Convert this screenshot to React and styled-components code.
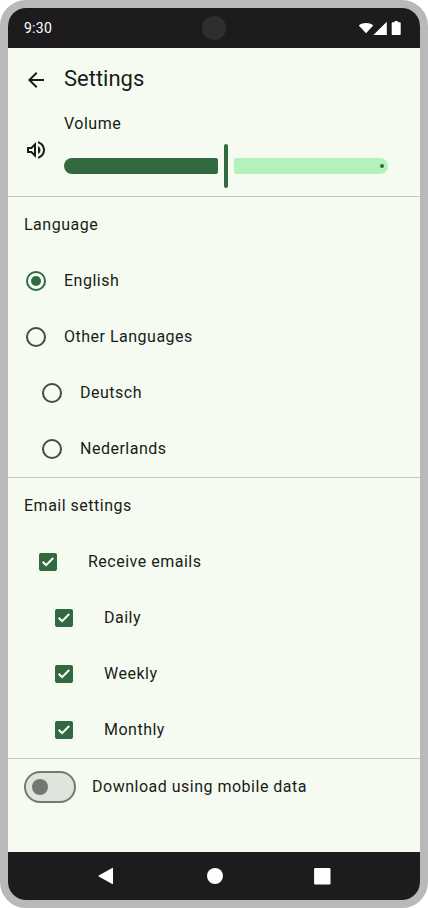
import React, { useState } from "react";
import styled, { createGlobalStyle } from "styled-components";

const GlobalStyle = createGlobalStyle`
  *, *::before, *::after { box-sizing: border-box; }
  body { margin: 0; background: #ffffff; font-family: Roboto, sans-serif; color: #181d18; }
  svg { display: block; }
`;

const Device = styled.div`
  display: flex;
  flex-direction: column;
  width: 428px;
  height: 908px;
  border: 8px solid #b9b9b9;
  border-radius: 26px;
  background: #f5fbf1;
  overflow: hidden;
`;

const StatusBar = styled.header`
  display: grid;
  grid-template-columns: 1fr 24px 1fr;
  align-items: center;
  flex: none;
  height: 40px;
  padding: 0 16px;
  background: #1d1b1e;
  color: #ffffff;
`;

const Clock = styled.time`
  font-size: 14px;
  line-height: 20px;
  letter-spacing: 0.25px;
`;

const Camera = styled.span`
  width: 24px;
  height: 24px;
  border-radius: 50%;
  background: #2e2e2e;
`;

const StatusIcons = styled.svg`
  justify-self: end;
  width: 46px;
  height: 16px;
`;

const AppBar = styled.div`
  display: flex;
  align-items: center;
  flex: none;
  gap: 16px;
  height: 64px;
  padding: 0 16px;
`;

const Title = styled.h1`
  margin: 0;
  font-size: 22px;
  font-weight: 400;
  line-height: 28px;
  padding-bottom: 2px;
`;

const IconButton = styled.button`
  width: 24px;
  height: 24px;
  padding: 0;
  border: 0;
  background: none;
  color: ${(p) => p.$tone || "#181d18"};
`;

const Content = styled.main`
  flex: 1;
`;

const VolumeSection = styled.section`
  display: grid;
  grid-template-columns: 24px 324px;
  column-gap: 16px;
  align-items: center;
  height: 84px;
  padding: 0 16px 8px;
`;

const VolumeControl = styled.div`
  display: flex;
  flex-direction: column;
  gap: 8px;
`;

const Label = styled.span`
  font-size: 16px;
  line-height: 24px;
  letter-spacing: 0.5px;
`;

const Slider = styled.div`
  display: flex;
  align-items: center;
  gap: 6px;
  height: 44px;
`;

const ActiveTrack = styled.div`
  height: 16px;
  border-radius: 8px 2px 2px 8px;
  background: #326941;
`;

const Handle = styled.div`
  flex: none;
  width: 4px;
  height: 44px;
  border-radius: 2px;
  background: #326941;
`;

const InactiveTrack = styled.div`
  display: flex;
  flex: 1;
  align-items: center;
  justify-content: flex-end;
  height: 16px;
  padding-right: 4px;
  border-radius: 2px 8px 8px 2px;
  background: #b4f1bd;
`;

const Stop = styled.span`
  width: 4px;
  height: 4px;
  border-radius: 50%;
  background: #326941;
`;

const Section = styled.section`
  border-top: 1px solid #c1c9bf;
`;

const Row = styled.div`
  display: flex;
  align-items: center;
  gap: ${(p) => p.$gap ?? 16}px;
  height: 56px;
  padding-left: ${(p) => p.$indent ?? 16}px;
`;

const Radio = styled.span`
  display: grid;
  place-items: center;
  width: 20px;
  height: 20px;
  margin: 2px;
  border: 2px solid ${(p) => (p.$checked ? "#326941" : "#414941")};
  border-radius: 50%;

  &::after {
    content: "";
    width: 10px;
    height: 10px;
    border-radius: 50%;
    background: ${(p) => (p.$checked ? "#326941" : "transparent")};
  }
`;

const Checkbox = styled.span`
  width: 18px;
  height: 18px;
  border: 2px solid ${(p) => (p.$checked ? "#326941" : "#414941")};
  border-radius: 2px;
  background: ${(p) => (p.$checked ? "#326941" : "transparent")};
`;

const CheckMark = styled.svg`
  width: 18px;
  height: 18px;
  margin: -2px;
`;

const Switch = styled.span`
  display: flex;
  align-items: center;
  justify-content: ${(p) => (p.$on ? "flex-end" : "flex-start")};
  width: 52px;
  height: 32px;
  padding: 0 6px;
  border: 2px solid #717970;
  border-radius: 16px;
  background: ${(p) => (p.$on ? "#326941" : "#dfe4dc")};
`;

const Thumb = styled.span`
  width: 16px;
  height: 16px;
  border-radius: 50%;
  background: ${(p) => (p.$on ? "#ffffff" : "#717970")};
`;

const NavBar = styled.nav`
  display: flex;
  align-items: center;
  justify-content: center;
  flex: none;
  gap: 84px;
  height: 48px;
  padding-left: 2px;
  background: #1d1b1e;
`;

const languages = [
  { name: "English", indent: 16 },
  { name: "Other Languages", indent: 16 },
  { name: "Deutsch", indent: 32 },
  { name: "Nederlands", indent: 32 },
];

const emails = [
  { name: "Receive emails", indent: 31 },
  { name: "Daily", indent: 47 },
  { name: "Weekly", indent: 47 },
  { name: "Monthly", indent: 47 },
];

export default function App() {
  const [language, setLanguage] = useState("English");
  const [checked, setChecked] = useState(emails.map(() => true));
  const [mobileData, setMobileData] = useState(false);
  const volume = 154;

  return (
    <>
      <GlobalStyle />
      <Device>
        <StatusBar>
          <Clock>9:30</Clock>
          <Camera />
          <StatusIcons viewBox="0 0 46 16" fill="#fff">
            <path d="M8 13.2.8 5.4C2.8 3.8 5.3 3 8 3s5.2.8 7.2 2.4z" />
            <path d="M28.8 1.7V15H15.4z" />
            <path d="M34.7 2.3h1.9V1h3.2v1.3h1.9c.6 0 1 .4 1 1V14c0 .6-.4 1-1 1h-7c-.6 0-1-.4-1-1V3.3c0-.6.4-1 1-1z" />
          </StatusIcons>
        </StatusBar>
        <Content>
          <AppBar>
            <IconButton aria-label="Back">
              <svg width="24" height="24" viewBox="0 0 24 24" fill="currentColor">
                <path d="M7.825 13l5.6 5.6L12 20l-8-8 8-8 1.425 1.4-5.6 5.6H20v2z" />
              </svg>
            </IconButton>
            <Title>Settings</Title>
          </AppBar>
          <VolumeSection>
            <svg width="24" height="24" viewBox="0 0 24 24" fill="currentColor">
              <path d="M3 9v6h4l5 5V4L7 9H3zm7-.17v6.34L7.83 13H5v-2h2.83L10 8.83zM16.5 12c0-1.77-1.02-3.29-2.5-4.03v8.05c1.48-.73 2.5-2.25 2.5-4.02zM14 3.23v2.06c2.89.86 5 3.54 5 6.71s-2.11 5.85-5 6.71v2.06c4.01-.91 7-4.49 7-8.77s-2.99-7.86-7-8.77z" />
            </svg>
            <VolumeControl>
              <Label>Volume</Label>
              <Slider>
                <ActiveTrack style={{ width: volume }} />
                <Handle />
                <InactiveTrack>
                  <Stop />
                </InactiveTrack>
              </Slider>
            </VolumeControl>
          </VolumeSection>
          <Section>
            <Row>
              <Label>Language</Label>
            </Row>
            {languages.map(({ name, indent }) => (
              <Row key={name} $indent={indent} onClick={() => setLanguage(name)}>
                <Radio $checked={language === name} />
                <Label>{name}</Label>
              </Row>
            ))}
          </Section>
          <Section>
            <Row>
              <Label>Email settings</Label>
            </Row>
            {emails.map(({ name, indent }, i) => (
              <Row
                key={name}
                $indent={indent}
                $gap={31}
                onClick={() => setChecked(checked.map((c, j) => (j === i ? !c : c)))}
              >
                <Checkbox $checked={checked[i]}>
                  {checked[i] && (
                    <CheckMark viewBox="0 0 18 18" fill="none" stroke="#fff" strokeWidth="2">
                      <path d="M3.7 8.8 7.1 12.1 14.2 5" />
                    </CheckMark>
                  )}
                </Checkbox>
                <Label>{name}</Label>
              </Row>
            ))}
          </Section>
          <Section>
            <Row onClick={() => setMobileData(!mobileData)}>
              <Switch $on={mobileData}>
                <Thumb $on={mobileData} />
              </Switch>
              <Label>Download using mobile data</Label>
            </Row>
          </Section>
        </Content>
        <NavBar>
          <IconButton $tone="#fff" aria-label="Back">
            <svg width="24" height="24" viewBox="0 0 24 24" fill="currentColor">
              <path d="M17.2 4c.5-.3.8-.1.8.3v15.4c0 .4-.3.6-.8.3L3.7 12.4c-.4-.2-.4-.6 0-.8z" />
            </svg>
          </IconButton>
          <IconButton $tone="#fff" aria-label="Home">
            <svg width="24" height="24" viewBox="0 0 24 24" fill="currentColor">
              <circle cx="12" cy="12" r="8" />
            </svg>
          </IconButton>
          <IconButton $tone="#fff" aria-label="Recents">
            <svg width="24" height="24" viewBox="0 0 24 24" fill="currentColor">
              <rect x="3.1" y="4" width="16.4" height="16.4" rx="1.2" />
            </svg>
          </IconButton>
        </NavBar>
      </Device>
    </>
  );
}
